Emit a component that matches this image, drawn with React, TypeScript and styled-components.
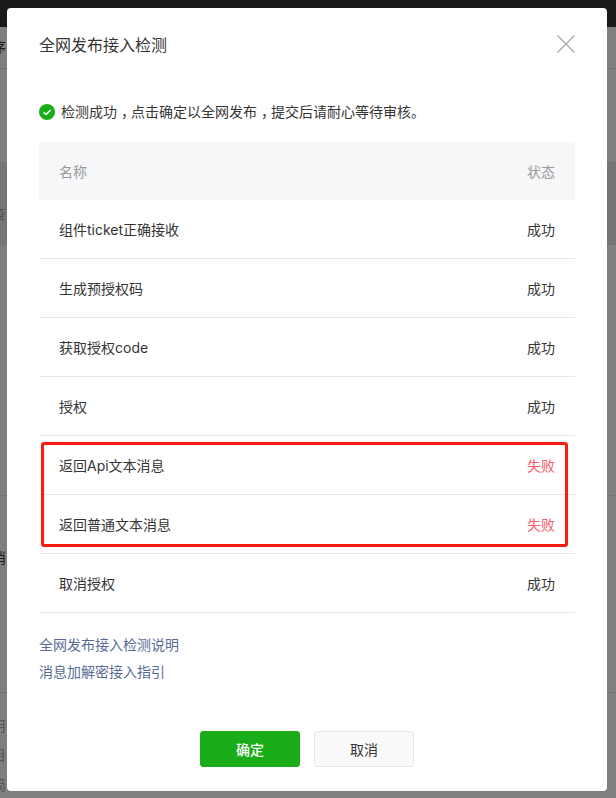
import styled, { createGlobalStyle } from "styled-components";

const GlobalStyle = createGlobalStyle`
    html, body {
        margin: 0;
        padding: 0;
        background: #7f7f7f;
    }
    body {
        font-family: Inter, "Noto Sans CJK SC", sans-serif;
        font-size: 14px;
        color: #353535;
    }
`;

const Page = styled.div`
    position: relative;
    width: 616px;
    height: 798px;
    overflow: hidden;
    background: #7f7f7f;
`;

const TopBar = styled.div`
    height: 27px;
    background: #191919;
`;

const BackdropLine = styled.div<{ $top: number }>`
    position: absolute;
    left: 0;
    right: 0;
    top: ${(p) => p.$top}px;
    height: 1px;
    background: #727272;
`;

const BackdropBand = styled.div`
    position: absolute;
    left: 0;
    right: 0;
    top: 162px;
    height: 83px;
    background: #737577;
`;

const BackdropText = styled.span<{ $top: number; $muted?: boolean }>`
    position: absolute;
    left: -8px;
    top: ${(p) => p.$top}px;
    font-size: 14px;
    line-height: 20px;
    color: ${(p) => (p.$muted ? "#555" : "#1a1a1a")};
`;

const Modal = styled.div`
    position: absolute;
    left: 7px;
    top: 8px;
    width: 600px;
    height: 783px;
    box-sizing: border-box;
    padding: 0 32px;
    background: #fff;
    border-radius: 4px;
    display: flex;
    flex-direction: column;
`;

const Header = styled.div`
    height: 72px;
    display: flex;
    align-items: center;
    justify-content: space-between;
`;

const Title = styled.h3`
    margin: 2px 0 0;
    font-size: 16px;
    font-weight: 400;
    line-height: 24px;
    color: #353535;
`;

const CloseIcon = styled.svg`
    display: block;
    width: 18px;
    height: 18px;
`;

const Notice = styled.div`
    margin-top: 22px;
    height: 20px;
    display: flex;
    align-items: center;
    gap: 6px;
    line-height: 20px;
`;

// the commas in the reference sit in the middle of their cell
const Comma = styled.span`
    display: inline-block;
    width: 14px;
    box-sizing: border-box;
    padding-left: 4px;
    overflow: hidden;
    vertical-align: bottom;
    white-space: nowrap;
`;

const Table = styled.div`
    margin-top: 20px;
    display: flex;
    flex-direction: column;
`;

const HeadRow = styled.div`
    height: 58px;
    padding: 0 20px;
    display: flex;
    align-items: center;
    justify-content: space-between;
    background: #f6f7f9;
    color: #9a9a9a;
`;

const Row = styled.div`
    height: 58px;
    padding: 0 20px;
    display: flex;
    align-items: center;
    justify-content: space-between;
    border-bottom: 1px solid #e7e7eb;
`;

const Status = styled.span<{ $failed?: boolean }>`
    color: ${(p) => (p.$failed ? "#fa5a6a" : "#353535")};
`;

const RedBox = styled.div`
    position: absolute;
    left: 34px;
    top: 434px;
    width: 521px;
    height: 99px;
    border: 3px solid #fd1a11;
    border-radius: 3px;
    pointer-events: none;
`;

const Links = styled.div`
    margin-top: 22px;
    display: flex;
    flex-direction: column;
    gap: 7px;
`;

const DocLink = styled.a`
    line-height: 20px;
    color: #576b95;
    text-decoration: none;
`;

const Footer = styled.div`
    margin-top: 49px;
    display: flex;
    justify-content: center;
    gap: 14px;
`;

const Button = styled.button<{ $primary?: boolean }>`
    width: 100px;
    height: 36px;
    padding: 0;
    box-sizing: border-box;
    border-radius: 3px;
    font: inherit;
    font-weight: ${(p) => (p.$primary ? 500 : 400)};
    color: ${(p) => (p.$primary ? "#fff" : "#353535")};
    background: ${(p) => (p.$primary ? "#1aad19" : "#fafafa")};
    border: 1px solid ${(p) => (p.$primary ? "#1aad19" : "#e5e5e5")};
`;

const rows = [
    { name: "组件ticket正确接收", failed: false },
    { name: "生成预授权码", failed: false },
    { name: "获取授权code", failed: false },
    { name: "授权", failed: false },
    { name: "返回Api文本消息", failed: true },
    { name: "返回普通文本消息", failed: true },
    { name: "取消授权", failed: false },
];

export default function App() {
    return (
        <Page>
            <GlobalStyle />
            <TopBar />
            <BackdropLine $top={68} />
            <BackdropBand />
            <BackdropLine $top={495} />
            <BackdropLine $top={692} />
            <BackdropText $top={37}>序</BackdropText>
            <BackdropText $top={204} $muted>查</BackdropText>
            <BackdropText $top={548}>消</BackdropText>
            <BackdropText $top={716} $muted>用</BackdropText>
            <BackdropText $top={745} $muted>目</BackdropText>
            <BackdropText $top={775} $muted>简</BackdropText>
            <Modal>
                <Header>
                    <Title>全网发布接入检测</Title>
                    <CloseIcon viewBox="0 0 18 18">
                        <path d="M0.5 0.5 L17.5 17.5 M17.5 0.5 L0.5 17.5" stroke="#a8a8a8" strokeWidth="1.3" fill="none" />
                    </CloseIcon>
                </Header>
                <Notice>
                    <svg width="16" height="16" viewBox="0 0 16 16">
                        <circle cx="8" cy="8" r="8" fill="#1aad19" />
                        <path d="M4.6 8.2 L7.1 10.5 L11.5 5.9" stroke="#fff" strokeWidth="1.4" fill="none" />
                    </svg>
                    <span>
                        检测成功<Comma>，</Comma>点击确定以全网发布<Comma>，</Comma>提交后请耐心等待审核。
                    </span>
                </Notice>
                <Table>
                    <HeadRow>
                        <span>名称</span>
                        <span>状态</span>
                    </HeadRow>
                    {rows.map((row) => (
                        <Row key={row.name}>
                            <span>{row.name}</span>
                            <Status $failed={row.failed}>{row.failed ? "失败" : "成功"}</Status>
                        </Row>
                    ))}
                </Table>
                <Links>
                    <DocLink href="#">全网发布接入检测说明</DocLink>
                    <DocLink href="#">消息加解密接入指引</DocLink>
                </Links>
                <Footer>
                    <Button $primary>确定</Button>
                    <Button>取消</Button>
                </Footer>
                <RedBox />
            </Modal>
        </Page>
    );
}
